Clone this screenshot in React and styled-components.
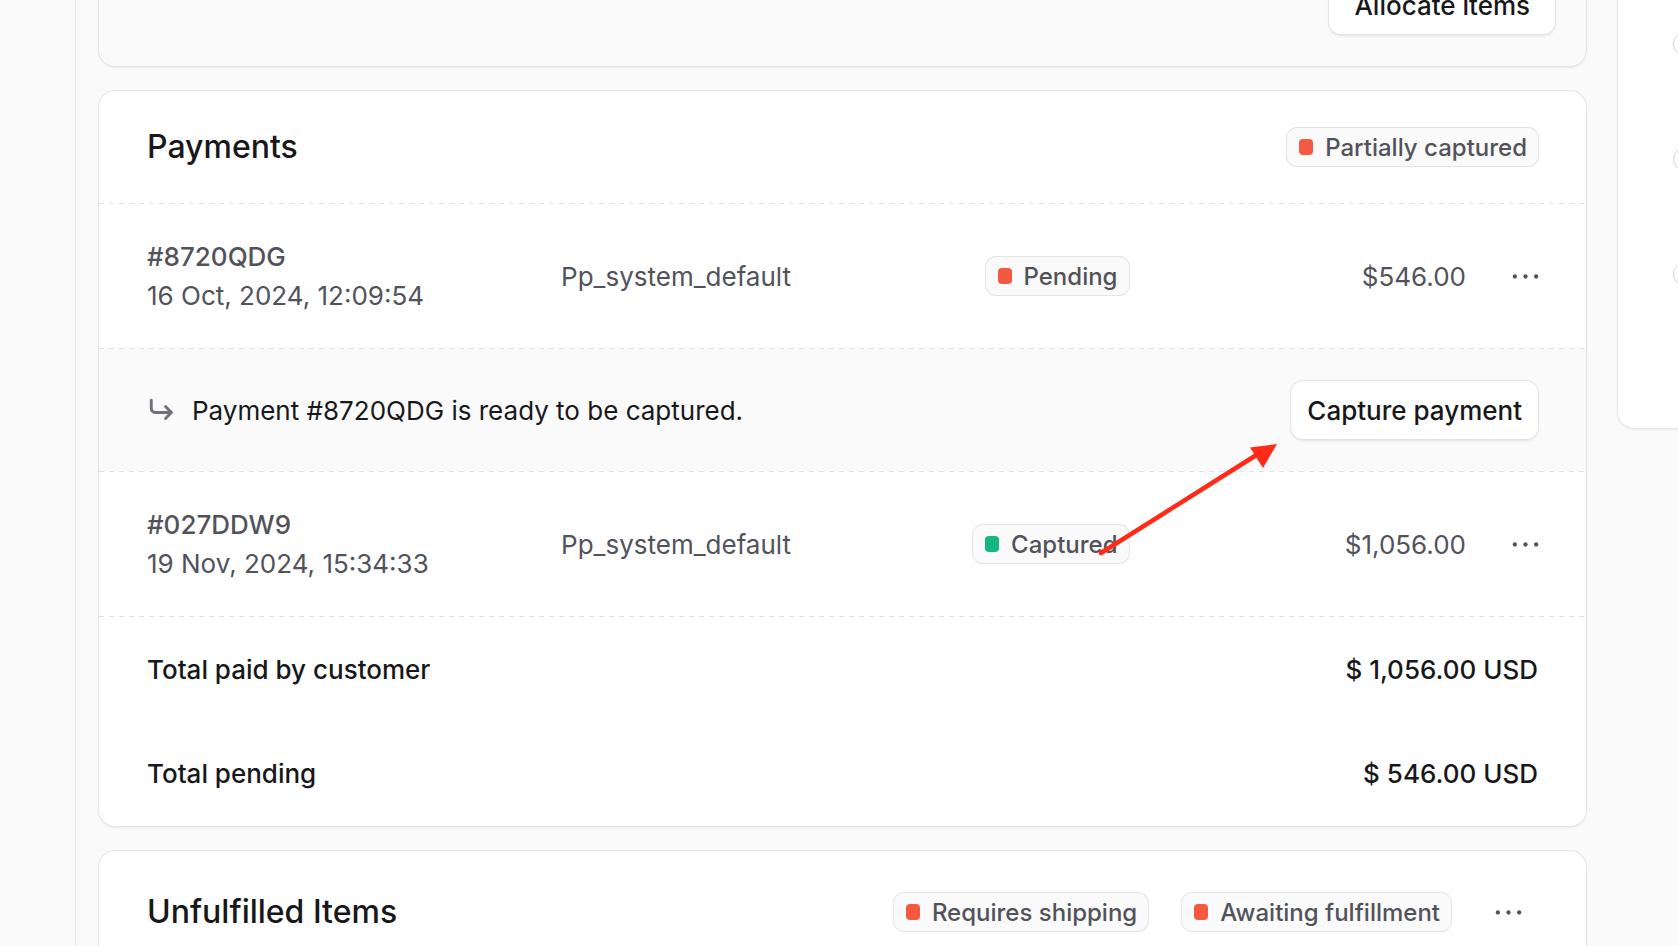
import React from 'react'
import styled, { createGlobalStyle } from 'styled-components'

const GlobalStyle = createGlobalStyle`
  html, body {
    margin: 0;
    padding: 0;
    height: 946px;
    overflow: hidden;
    background: #fafafa;
    font-family: Inter, "Noto Sans", sans-serif;
    color: #18181b;
  }
  * { box-sizing: border-box; }
`

// dashed divider drawn as a background so dash length matches the reference
const dashedTop = `
  background-image: linear-gradient(to right, #e1e1e4 55%, transparent 0);
  background-size: 10px 1px;
  background-repeat: repeat-x;
  background-position: left top;
`

const Page = styled.div`
  position: relative;
  display: grid;
  grid-template-columns: 76px 1fr;
  height: 946px;
  overflow: hidden;
`

const Sidebar = styled.aside`
  background: #fafafa;
  border-right: 1px solid #e4e4e7;
`

const Main = styled.main`
  display: flex;
  align-items: flex-start;
  gap: 32px;
  padding-left: 23px;
  overflow: hidden;
`

const Column = styled.div`
  flex: 0 0 1487px;
  display: flex;
  flex-direction: column;
  gap: 25px;
  margin-top: -64px;
`

const Card = styled.section`
  flex-shrink: 0;
  background: ${(p) => (p.subtle ? '#fafafa' : '#ffffff')};
  border-radius: 16px;
  box-shadow: 0 0 0 1px #e4e4e7, 0 2px 3px rgba(0, 0, 0, 0.07);
  overflow: hidden;
`

const Footer = styled.div`
  display: flex;
  justify-content: flex-end;
  padding: 40px 31px 32px 48px;
`

const Header = styled.div`
  display: flex;
  align-items: center;
  justify-content: space-between;
  gap: 31px;
  padding: ${(p) => p.pad || 31}px 48px;
`

const Title = styled.h2`
  margin: 0;
  font-size: 32px;
  line-height: 50px;
  font-weight: 500;
  color: #18181b;
`

const HeaderActions = styled.div`
  display: flex;
  align-items: center;
  gap: 34px;
`

const BadgeBox = styled.span`
  display: inline-flex;
  align-items: center;
  gap: 12px;
  height: 38px;
  padding: 0 11px 0 12px;
  border-radius: 10px;
  background: #fafafa;
  box-shadow: 0 0 0 1px #e4e4e7;
  font-size: 24px;
  font-weight: 500;
  color: #52525b;
  white-space: nowrap;
`

const Dot = styled.span`
  width: 14px;
  height: 16px;
  border-radius: 4px;
  background: ${(p) => (p.color === 'green' ? '#14b77f' : '#f45a41')};
`

const Row = styled.div`
  display: grid;
  grid-template-columns: 1fr 1fr 1fr 1fr 43px;
  column-gap: 31px;
  align-items: center;
  padding: 34px 46px 33px 48px;
  ${dashedTop}
`

const Cell = styled.div`
  display: flex;
  flex-direction: column;
  align-items: ${(p) => p.align || 'flex-start'};
  font-size: 26px;
  line-height: 39px;
  color: #52525b;
`

const Strong = styled.span`
  font-weight: 500;
`

const Notice = styled.div`
  display: flex;
  align-items: center;
  justify-content: space-between;
  padding: 33px 48px 32px;
  background-color: #fafafa;
  ${dashedTop}
`

const NoticeText = styled.div`
  display: flex;
  align-items: center;
  gap: 16px;
  font-size: 26px;
  color: #18181b;
`

const Button = styled.button`
  height: 58px;
  padding: 0 ${(p) => p.padX || 16}px;
  border: none;
  border-radius: 12px;
  background: #ffffff;
  box-shadow: 0 0 0 1px #e4e4e7, 0 2px 3px rgba(0, 0, 0, 0.1);
  font-family: inherit;
  font-size: 26px;
  font-weight: 500;
  color: #18181b;
  white-space: nowrap;
`

const Totals = styled.div`
  padding-top: 2px;
  ${dashedTop}
`

const TotalRow = styled.div`
  display: flex;
  align-items: center;
  justify-content: space-between;
  padding: 32px 48px;
  font-size: 26px;
  line-height: 40px;
  font-weight: 500;
  color: #18181b;
`

const IconButton = styled.span`
  display: flex;
  align-items: center;
  justify-content: ${(p) => p.justify || 'flex-end'};
  justify-self: end;
  width: 39px;
  height: 39px;
  margin-left: ${(p) => p.ml || 0}px;
  margin-right: ${(p) => p.mr || 0}px;
  color: #52525b;
`

const Filler = styled.div`
  height: 300px;
  ${dashedTop}
`

const SidePanel = styled.aside`
  flex: 0 0 400px;
  height: 492px;
  margin-top: -64px;
  padding: 96px 0 0 55px;
  display: flex;
  flex-direction: column;
  gap: 91px;
  background: #ffffff;
  border-bottom-left-radius: 16px;
  box-shadow: 0 0 0 1px #e4e4e7, 0 2px 3px rgba(0, 0, 0, 0.06);
`

const Ring = styled.span`
  width: 24px;
  height: 24px;
  border-radius: 50%;
  border: 1.5px solid #d4d4d8;
`

const Annotation = styled.svg`
  position: absolute;
  left: 0;
  top: 0;
  width: 1678px;
  height: 946px;
  pointer-events: none;
`

const Ellipsis = () => (
  <svg width="29" height="29" viewBox="0 0 15 15" fill="currentColor">
    <circle cx="2" cy="7.5" r="1.1" />
    <circle cx="7.5" cy="7.5" r="1.1" />
    <circle cx="13" cy="7.5" r="1.1" />
  </svg>
)

const ArrowDownRight = () => (
  <svg width="29" height="29" viewBox="0 0 15 15" fill="none" stroke="#71717a" strokeWidth="1.5" strokeLinecap="round" strokeLinejoin="round">
    <path d="M2.2 2.2v4.3c0 1.1.9 2 2 2h8.3" />
    <path d="M9.6 5.4l3 3.1-3 3.1" />
  </svg>
)

const Badge = ({ color, children }) => (
  <BadgeBox>
    <Dot color={color} />
    {children}
  </BadgeBox>
)

const payments = [
  { id: '#8720QDG', date: '16 Oct, 2024, 12:09:54', status: 'Pending', color: 'red', amount: '$546.00' },
  { id: '#027DDW9', date: '19 Nov, 2024, 15:34:33', status: 'Captured', color: 'green', amount: '$1,056.00' },
]

const PaymentRow = ({ p }) => (
  <Row>
    <Cell>
      <Strong>{p.id}</Strong>
      <span>{p.date}</span>
    </Cell>
    <Cell align="flex-end">Pp_system_default</Cell>
    <Cell align="flex-end">
      <Badge color={p.color}>{p.status}</Badge>
    </Cell>
    <Cell align="flex-end">{p.amount}</Cell>
    <IconButton>
      <Ellipsis />
    </IconButton>
  </Row>
)

export default function App() {
  return (
    <Page>
      <GlobalStyle />
      <Sidebar />
      <Main>
        <Column>
          <Card subtle>
            <Footer>
              <Button padX={25}>Allocate items</Button>
            </Footer>
          </Card>

          <Card>
            <Header>
              <Title>Payments</Title>
              <Badge color="red">Partially captured</Badge>
            </Header>
            <PaymentRow p={payments[0]} />
            <Notice>
              <NoticeText>
                <ArrowDownRight />
                Payment #8720QDG is ready to be captured.
              </NoticeText>
              <Button>Capture payment</Button>
            </Notice>
            <PaymentRow p={payments[1]} />
            <Totals>
              <TotalRow>
                <span>Total paid by customer</span>
                <span>$ 1,056.00 USD</span>
              </TotalRow>
              <TotalRow>
                <span>Total pending</span>
                <span>$ 546.00 USD</span>
              </TotalRow>
            </Totals>
          </Card>

          <Card>
            <Header pad={36}>
              <Title>Unfulfilled Items</Title>
              <HeaderActions>
                <Badge color="red">Requires shipping</Badge>
                <Badge color="red">Awaiting fulfillment</Badge>
                <IconButton justify="center" ml={4} mr={10}>
                  <Ellipsis />
                </IconButton>
              </HeaderActions>
            </Header>
            <Filler />
          </Card>
        </Column>

        <SidePanel>
          <Ring />
          <Ring />
          <Ring />
        </SidePanel>
      </Main>

      <Annotation viewBox="0 0 1678 946">
        <line x1="1101" y1="553" x2="1258" y2="454" stroke="#ff2a17" strokeWidth="4.5" strokeLinecap="round" />
        <polygon points="1277,444 1263,468 1250,447.5" fill="#ff2a17" />
      </Annotation>
    </Page>
  )
}
